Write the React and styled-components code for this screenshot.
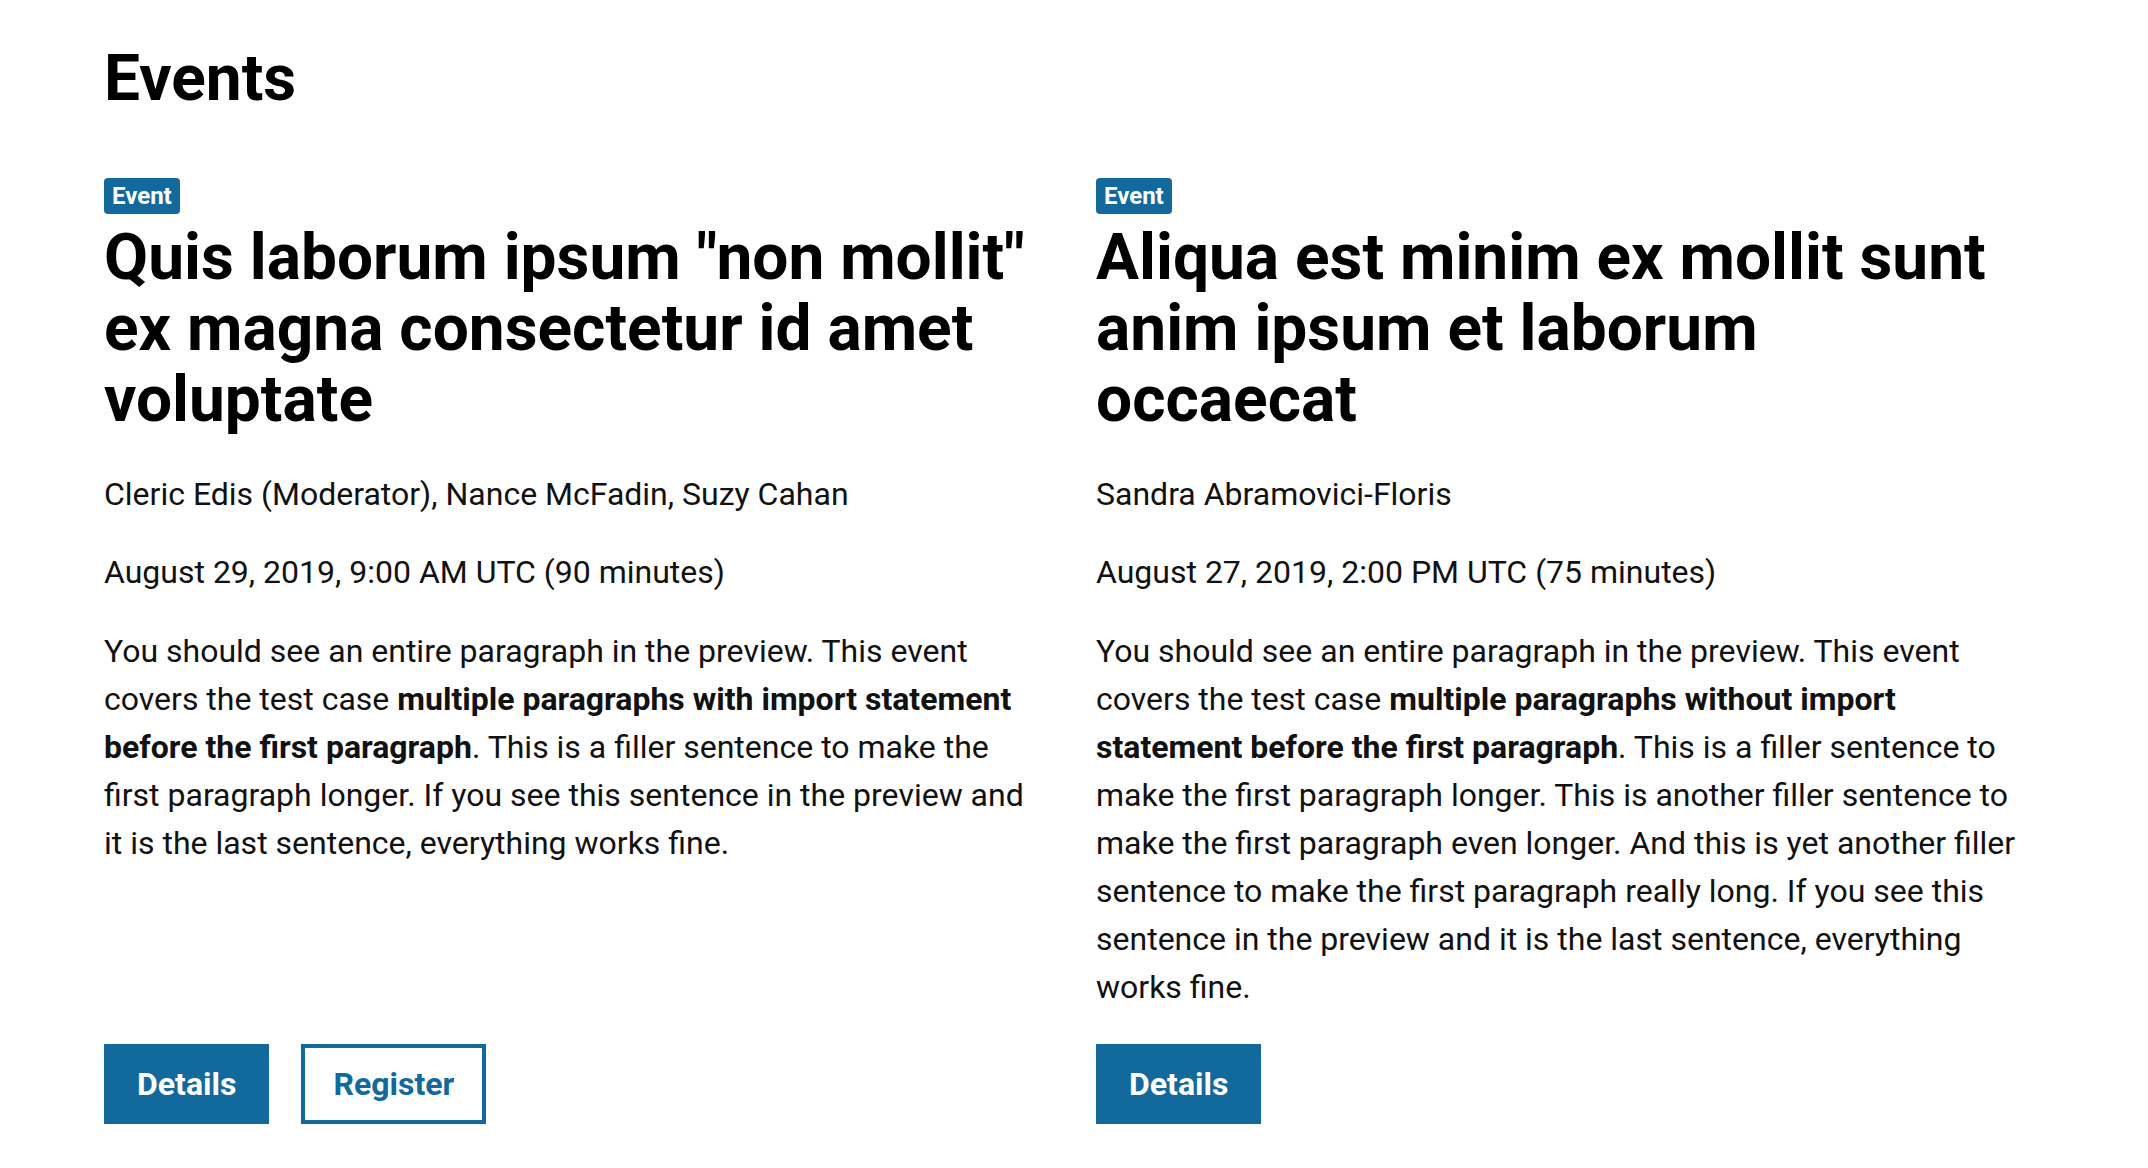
import React from 'react';
import styled, { createGlobalStyle } from 'styled-components';

const GlobalStyle = createGlobalStyle`
  html, body {
    margin: 0;
    padding: 0;
    background: #ffffff;
  }
  body {
    font-family: Roboto, "Liberation Sans", Arial, sans-serif;
    color: #111111;
  }
`;

const Page = styled.main`
  box-sizing: border-box;
  width: 100%;
  padding: 43px 104px 0 104px;
`;

const PageTitle = styled.h1`
  margin: 0;
  font-size: 64px;
  line-height: 71px;
  font-weight: 700;
  color: #000000;
`;

const CardGrid = styled.div`
  display: grid;
  grid-template-columns: 932px 932px;
  column-gap: 60px;
  margin-top: 64px;
`;

const Card = styled.article`
  display: flex;
  flex-direction: column;
  align-items: flex-start;
`;

const Badge = styled.span`
  display: inline-block;
  height: 36px;
  line-height: 36px;
  padding: 0 8px;
  border-radius: 4px;
  background: #11699c;
  color: #ffffff;
  font-size: 24px;
  font-weight: 700;
`;

const CardTitle = styled.h2`
  margin: 8px 0 0 0;
  font-size: 64px;
  line-height: 71px;
  font-weight: 700;
  color: #000000;
`;

const Meta = styled.p`
  margin: ${(p) => p.$top}px 0 0 0;
  font-size: 32px;
  line-height: 48px;
`;

const Description = styled.p`
  margin: 31px 0 0 0;
  font-size: 32px;
  line-height: 48px;

  strong {
    font-weight: 700;
  }
`;

const ButtonRow = styled.div`
  display: flex;
  gap: 32px;
  margin-top: auto;
  padding-top: 33px;
`;

const Button = styled.a`
  box-sizing: border-box;
  display: inline-flex;
  align-items: center;
  justify-content: center;
  height: 80px;
  padding: 0 ${(p) => (p.$outline ? 28 : 33)}px;
  font-size: 32px;
  font-weight: 700;
  text-decoration: none;
  cursor: pointer;
  background: ${(p) => (p.$outline ? '#ffffff' : '#11699c')};
  color: ${(p) => (p.$outline ? '#11699c' : '#ffffff')};
  border: ${(p) => (p.$outline ? '4px solid #11699c' : 'none')};
`;

const events = [
  {
    title: 'Quis laborum ipsum "non mollit" ex magna consectetur id amet voluptate',
    speakers: 'Cleric Edis (Moderator), Nance McFadin, Suzy Cahan',
    date: 'August 29, 2019, 9:00 AM UTC (90 minutes)',
    body: (
      <>
        You should see an entire paragraph in the preview. This event covers the test case{' '}
        <strong>multiple paragraphs with import statement before the first paragraph</strong>. This is a
        filler sentence to make the first paragraph longer. If you see this sentence in the preview and it
        is the last sentence, everything works fine.
      </>
    ),
    register: true,
  },
  {
    title: 'Aliqua est minim ex mollit sunt anim ipsum et laborum occaecat',
    speakers: 'Sandra Abramovici-Floris',
    date: 'August 27, 2019, 2:00 PM UTC (75 minutes)',
    body: (
      <>
        You should see an entire paragraph in the preview. This event covers the test case{' '}
        <strong>multiple paragraphs without import statement before the first paragraph</strong>. This is a
        filler sentence to make the first paragraph longer. This is another filler sentence to make the
        first paragraph even longer. And this is yet another filler sentence to make the first paragraph
        really long. If you see this sentence in the preview and it is the last sentence, everything works
        fine.
      </>
    ),
    register: false,
  },
];

const EventCard = ({ event }) => (
  <Card>
    <Badge>Event</Badge>
    <CardTitle>{event.title}</CardTitle>
    <Meta $top={35}>{event.speakers}</Meta>
    <Meta $top={30}>{event.date}</Meta>
    <Description>{event.body}</Description>
    <ButtonRow>
      <Button>Details</Button>
      {event.register && <Button $outline>Register</Button>}
    </ButtonRow>
  </Card>
);

export default function App() {
  return (
    <>
      <GlobalStyle />
      <Page>
        <PageTitle>Events</PageTitle>
        <CardGrid>
          {events.map((e) => (
            <EventCard key={e.title} event={e} />
          ))}
        </CardGrid>
      </Page>
    </>
  );
}
